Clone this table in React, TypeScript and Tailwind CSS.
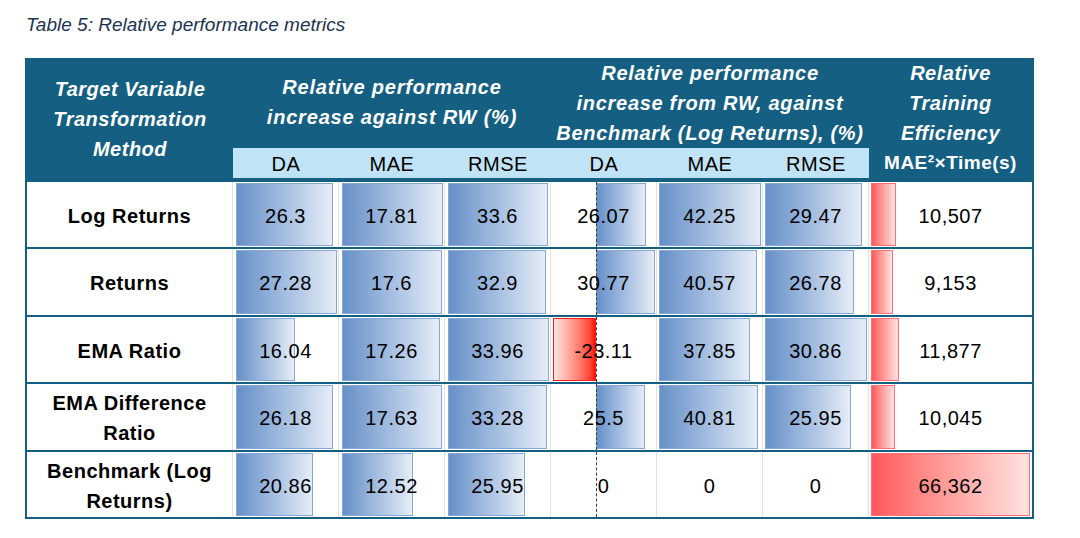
import React from 'react';

type Row = {
  label: string[];
  rw: string[];
  bench: string[];
  eff: string;
  tall?: boolean;
};

const rows: Row[] = [
  { label: ['Log Returns'], rw: ['26.3', '17.81', '33.6'], bench: ['26.07', '42.25', '29.47'], eff: '10,507' },
  { label: ['Returns'], rw: ['27.28', '17.6', '32.9'], bench: ['30.77', '40.57', '26.78'], eff: '9,153', tall: true },
  { label: ['EMA Ratio'], rw: ['16.04', '17.26', '33.96'], bench: ['-23.11', '37.85', '30.86'], eff: '11,877' },
  { label: ['EMA Difference', 'Ratio'], rw: ['26.18', '17.63', '33.28'], bench: ['25.5', '40.81', '25.95'], eff: '10,045', tall: true },
  { label: ['Benchmark (Log', 'Returns)'], rw: ['20.86', '12.52', '25.95'], bench: ['0', '0', '0'], eff: '66,362' },
];

const num = (s: string) => parseFloat(s.replace(/,/g, ''));

const colMax = (pick: (r: Row) => string) => Math.max(...rows.map((r) => num(pick(r))));

// Excel-style data bar limits
const BAR_MAX = 101;
const AXIS = 45; // dashed axis offset in the benchmark DA column
const rwMax = [0, 1, 2].map((i) => colMax((r) => r.rw[i]));
const benchMax = [0, 1, 2].map((i) => colMax((r) => r.bench[i]));
const benchMin = Math.min(...rows.map((r) => num(r.bench[0])));
const effMax = colMax((r) => r.eff);

const GRID = 'grid grid-cols-[206px_repeat(6,106px)_163px]';

function BlueBar({ left, width }: { left: number; width: number }) {
  if (width <= 0) return null;
  return (
    <div
      className="absolute top-px bottom-px border border-[#86a8d8] bg-linear-to-r from-[#6690c8] to-[#e6edf7]"
      style={{ left, width }}
    />
  );
}

function Cell({ children, bar, last }: { children: React.ReactNode; bar?: React.ReactNode; last?: boolean }) {
  return (
    <div className={`relative flex items-center justify-center pt-[2px] ${last ? '' : 'border-r border-[#e2e2e2]'}`}>
      {bar}
      <span className="relative">{children}</span>
    </div>
  );
}

function BenchDaCell({ value }: { value: string }) {
  const v = num(value);
  let bar: React.ReactNode = null;
  if (v > 0) {
    bar = <BlueBar left={AXIS} width={(v / benchMax[0]) * (BAR_MAX - AXIS + 3)} />;
  } else if (v < 0) {
    const w = (v / benchMin) * (AXIS - 2);
    bar = (
      <div
        className="absolute top-px bottom-px border border-[#ff1a1a] bg-linear-to-r from-[#ffe3e3] to-[#ff0000]"
        style={{ left: AXIS - w, width: w }}
      />
    );
  }
  return (
    <Cell
      bar={
        <>
          {bar}
          <div className="absolute top-0 bottom-0 left-[45px] border-l border-dashed border-[#3a3a3a]" />
        </>
      }
    >
      {value}
    </Cell>
  );
}

export default function App() {
  return (
    <div className="w-[1080px] h-[538px] bg-white font-['Liberation_Sans',Arial,sans-serif] text-black">
      <p className="pl-[26px] pt-[13px] text-[19px] leading-[24px] italic text-[#1b3350]">
        Table 5: Relative performance metrics
      </p>

      <div className="ml-[25px] mt-[21px] w-[1009px] border-x-2 border-[#156082] tracking-[0.5px]">
        {/* header */}
        <div className={`${GRID} grid-rows-[90px_30px] bg-[#156082] pb-[2px] text-white text-[20px] leading-[30px]`}>
          <div className="row-span-2 flex flex-col items-center justify-center font-bold italic pt-[2px]">
            <span>Target Variable</span>
            <span>Transformation</span>
            <span>Method</span>
          </div>
          <div className="col-span-3 flex flex-col items-center justify-center font-bold italic tracking-[0.8px] pb-[2px]">
            <span>Relative performance</span>
            <span>increase against RW (%)</span>
          </div>
          <div className="col-span-3 flex flex-col items-center justify-center font-bold italic tracking-[0.7px]">
            <span>Relative performance</span>
            <span>increase from RW, against</span>
            <span>Benchmark (Log Returns), (%)</span>
          </div>
          <div className="row-span-2 flex flex-col items-center justify-center font-bold">
            <span className="italic">Relative</span>
            <span className="italic">Training</span>
            <span className="italic">Efficiency</span>
            <span className="text-[19px]">MAE²×Time(s)</span>
          </div>
          {['DA', 'MAE', 'RMSE', 'DA', 'MAE', 'RMSE'].map((h, i) => (
            <div key={i} className="flex items-center justify-center bg-[#c0e4f5] text-black pt-[2px]">
              {h}
            </div>
          ))}
        </div>

        {/* body */}
        <div className="border-t-2 border-[#156082]">
          {rows.map((r, ri) => (
            <div
              key={ri}
              className={`${GRID} ${r.tall ? 'h-[68px]' : 'h-[67px]'} border-b-2 border-[#156082] text-[20px]`}
            >
              <div className="flex flex-col items-center justify-center border-r border-[#e2e2e2] font-bold leading-[30px] pt-[2px]">
                {r.label.map((l) => (
                  <span key={l}>{l}</span>
                ))}
              </div>
              {r.rw.map((v, i) => (
                <Cell key={`rw${i}`} bar={<BlueBar left={3} width={(num(v) / rwMax[i]) * BAR_MAX} />}>
                  {v}
                </Cell>
              ))}
              <BenchDaCell value={r.bench[0]} />
              {r.bench.slice(1).map((v, i) => (
                <Cell key={`b${i}`} bar={<BlueBar left={2} width={(num(v) / benchMax[i + 1]) * (BAR_MAX + 1)} />}>
                  {v}
                </Cell>
              ))}
              <Cell
                last
                bar={
                  <div
                    className="absolute top-px bottom-px left-[2px] border border-[#ff6f73] bg-linear-to-r from-[#ff555a] to-[#ffe2e3]"
                    style={{ width: (num(r.eff) / effMax) * 159 }}
                  />
                }
              >
                {r.eff}
              </Cell>
            </div>
          ))}
        </div>
      </div>
    </div>
  );
}
